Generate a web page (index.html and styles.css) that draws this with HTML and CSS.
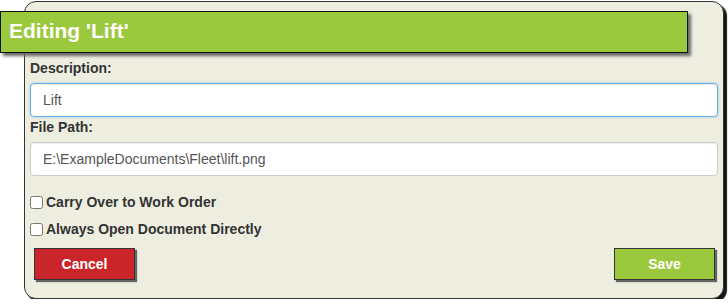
FILE: index.html
```html
<!DOCTYPE html>
<html>
<head>
<meta charset="utf-8">
<link rel="stylesheet" href="styles.css">
</head>
<body>
<div class="panel">
  <div class="header">Editing 'Lift'</div>
  <div class="body">
    <label class="label">Description:</label>
    <div class="input focus">Lift</div>
    <label class="label second">File Path:</label>
    <div class="input">E:\ExampleDocuments\Fleet\lift.png</div>
    <label class="check first"><input type="checkbox"><span>Carry Over to Work Order</span></label>
    <label class="check"><input type="checkbox"><span>Always Open Document Directly</span></label>
    <div class="actions">
      <button class="btn cancel">Cancel</button>
      <button class="btn save">Save</button>
    </div>
  </div>
</div>
</body>
</html>
```

FILE: styles.css
```css
html, body {
  margin: 0;
  padding: 0;
  background: #ffffff;
  font-family: "Liberation Sans", Arial, sans-serif;
}
.panel {
  box-sizing: border-box;
  margin: 1px 0 0 24px;
  width: 700px;
  height: 298px;
  background: #eeeee0;
  border: 1px solid #333;
  border-radius: 12px;
  box-shadow: 3px 3px 1px #151515;
}
.header {
  box-sizing: border-box;
  margin: 9px 0 0 -25px;
  width: 688px;
  height: 42px;
  background: #9ac93d;
  border: 1px solid #111;
  box-shadow: 3px 3px 3px #666;
  color: #fff;
  font-weight: bold;
  font-size: 21px;
  line-height: 38px;
  padding-left: 8px;
}
.body {
  padding: 0 5px;
  display: flex;
  flex-direction: column;
}
.label {
  display: block;
  font-size: 14px;
  font-weight: bold;
  color: #333;
  line-height: 16px;
  margin: 7px 0 7px 0;
}
.label.second {
  margin-top: 2px;
}
.input {
  box-sizing: border-box;
  height: 34px;
  border: 1px solid #ccc;
  border-radius: 4px;
  background: #fff;
  font-size: 14px;
  color: #555;
  line-height: 32px;
  padding-left: 12px;
  box-shadow: inset 0 1px 1px rgba(0,0,0,0.075);
}
.input.focus {
  border-color: #66afe9;
  box-shadow: inset 0 1px 1px rgba(0,0,0,0.075), 0 0 3px rgba(102,175,233,0.6);
}
.check {
  display: flex;
  align-items: center;
  height: 16px;
  font-size: 14px;
  font-weight: bold;
  color: #333;
  margin-top: 11px;
}
.check.first {
  margin-top: 18px;
}
.check input {
  margin: 0 3px 0 0;
  width: 13px;
  height: 13px;
}
.actions {
  display: flex;
  justify-content: space-between;
  margin: 11px 3px 0 4px;
}
.btn {
  box-sizing: border-box;
  width: 101px;
  height: 32px;
  border: 1px solid #333;
  color: #fff;
  font-family: "Liberation Sans", Arial, sans-serif;
  font-weight: bold;
  font-size: 14px;
  box-shadow: 2px 2px 1px #666;
  padding: 0;
}
.cancel {
  background: #c9252b;
}
.save {
  background: #9ac93d;
}
```
